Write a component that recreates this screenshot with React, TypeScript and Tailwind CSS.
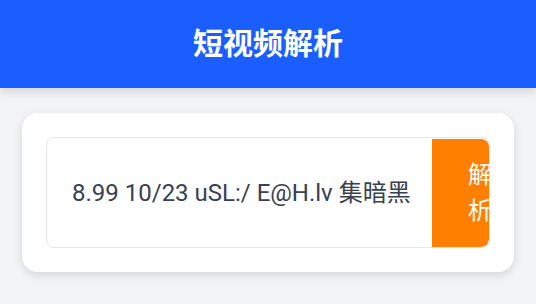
export default function App() {
    const value = '8.99 10/23 uSL:/ E@H.lv 集暗黑';

    return (
        <div className="min-h-screen bg-[#f2f3f5] font-['Roboto','Noto_Sans_CJK_SC',sans-serif]">
            <header className="h-[88px] bg-[#1a5eff] shadow-[0_4px_8px_rgba(0,0,0,0.12)] flex items-center justify-center">
                <h1 className="text-white text-[30px] font-bold leading-none">短视频解析</h1>
            </header>

            <main className="px-[22px] pt-[25px]">
                <div className="bg-white rounded-2xl shadow-[0_3px_8px_rgba(0,0,0,0.12)] p-6">
                    <div className="h-[111px] border border-gray-200 rounded-lg flex overflow-hidden">
                        <div className="flex-1 flex items-center pl-[25px] pr-4 overflow-hidden">
                            <span className="text-[24px] text-[#374151] whitespace-nowrap leading-none">{value}</span>
                        </div>
                        <button className="w-[57px] mt-[1px] bg-[#ff7f00] text-white text-[24px] leading-[36px] pl-[36px] overflow-hidden flex items-center rounded-r-lg">
                            <span className="block w-[24px] break-all">解析</span>
                        </button>
                    </div>
                </div>
            </main>
        </div>
    );
}
